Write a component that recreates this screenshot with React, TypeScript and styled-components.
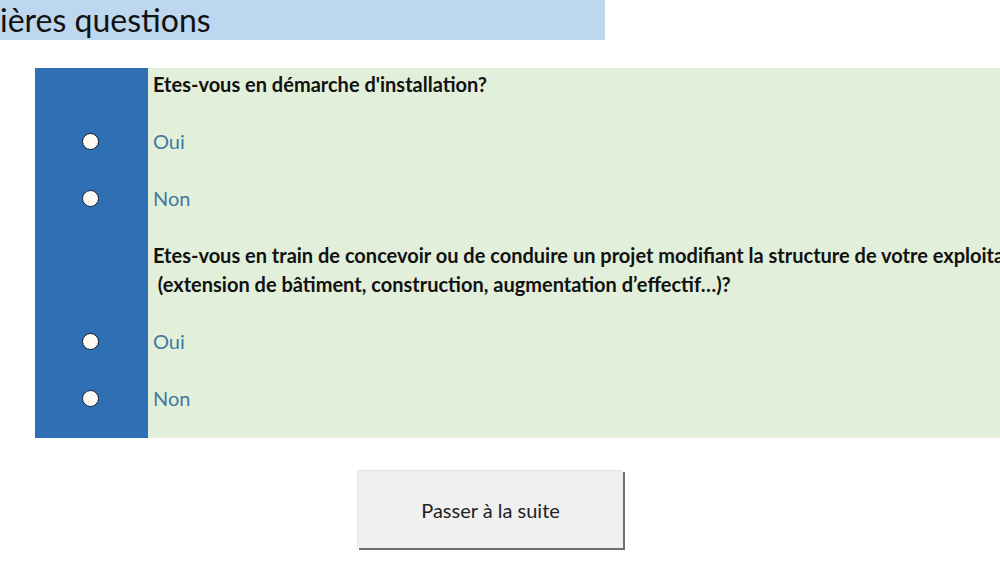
import React from 'react';
import styled, {createGlobalStyle} from 'styled-components';

const Global = createGlobalStyle`
  html, body { margin: 0; padding: 0; background: #ffffff; }
  body { font-family: Lato, "Open Sans", sans-serif; overflow: hidden; }
`;

const Page = styled.div`
  width: 1000px;
  height: 562px;
  overflow: hidden;
  display: flex;
  flex-direction: column;
`;

const TitleBar = styled.div`
  width: 605px;
  height: 40px;
  background: #bdd7ee;
  font-size: 32px;
  line-height: 40px;
  color: #111;
  white-space: nowrap;
  overflow: hidden;
`;

const Sheet = styled.div`
  margin: 28px 0 0 35px;
  display: grid;
  grid-template-columns: 113px 1fr;
  width: 1000px;
`;

const Row = styled.div<{h: number}>`
  display: contents;
  & > div { height: ${p => p.h}px; }
`;

const Cell = styled.div`
  display: flex;
  align-items: flex-start;
  padding: 2px 0 0 5px;
  box-sizing: border-box;
  background: #e2efda;
  overflow: hidden;
`;

const SideCell = styled.div`
  background: #2e70b3;
  display: flex;
  justify-content: center;
  padding: 2px 2px 0 0;
  box-sizing: border-box;
`;

const RadioWrap = styled.div`
  height: 29px;
  display: flex;
  align-items: center;
`;

const Radio = styled.span`
  display: block;
  width: 17px;
  height: 17px;
  border-radius: 50%;
  background: #fdfbf4;
  border: 1.5px solid #0f1e33;
  box-sizing: border-box;
`;

const Question = styled(Cell)`
  flex-direction: column;
  font-weight: 700;
  font-size: 20px;
  line-height: 29px;
  color: #111;
  white-space: pre;
`;

const Answer = styled(Cell)`
  font-size: 20px;
  line-height: 29px;
  color: #44789f;
`;

const Footer = styled.div`
  display: flex;
  padding: 32px 0 0 357px;
`;

const Button = styled.button`
  width: 266px;
  height: 78px;
  background: #f0f0f0;
  border: none;
  border-top: 1px solid #e4e4e4;
  border-left: 1px solid #e4e4e4;
  box-shadow: 2px 2px 0 #6f6f6f;
  font-family: inherit;
  font-size: 20px;
  color: #222;
  cursor: pointer;
`;

type Line = {kind: 'q', text: string[], h: number} | {kind: 'a', text: string, h: number};

const lines: Line[] = [
  {kind: 'q', text: ["Etes-vous en démarche d'installation?"], h: 57},
  {kind: 'a', text: 'Oui', h: 57},
  {kind: 'a', text: 'Non', h: 57},
  {kind: 'q', text: [
    'Etes-vous en train de concevoir ou de conduire un projet modifiant la structure de votre exploitation',
    ' (extension de bâtiment, construction, augmentation d’effectif…)?',
  ], h: 86},
  {kind: 'a', text: 'Oui', h: 57},
  {kind: 'a', text: 'Non', h: 56},
];

export default function App() {
  return (
    <Page>
      <Global />
      <TitleBar>ières questions</TitleBar>
      <Sheet>
        {lines.map((l, i) => (
          <Row h={l.h} key={i}>
            <SideCell>
              {l.kind === 'a' && <RadioWrap><Radio /></RadioWrap>}
            </SideCell>
            {l.kind === 'q'
              ? <Question>{l.text.map((t, j) => <span key={j}>{t}</span>)}</Question>
              : <Answer>{l.text}</Answer>}
          </Row>
        ))}
      </Sheet>
      <Footer>
        <Button>Passer à la suite</Button>
      </Footer>
    </Page>
  );
}
